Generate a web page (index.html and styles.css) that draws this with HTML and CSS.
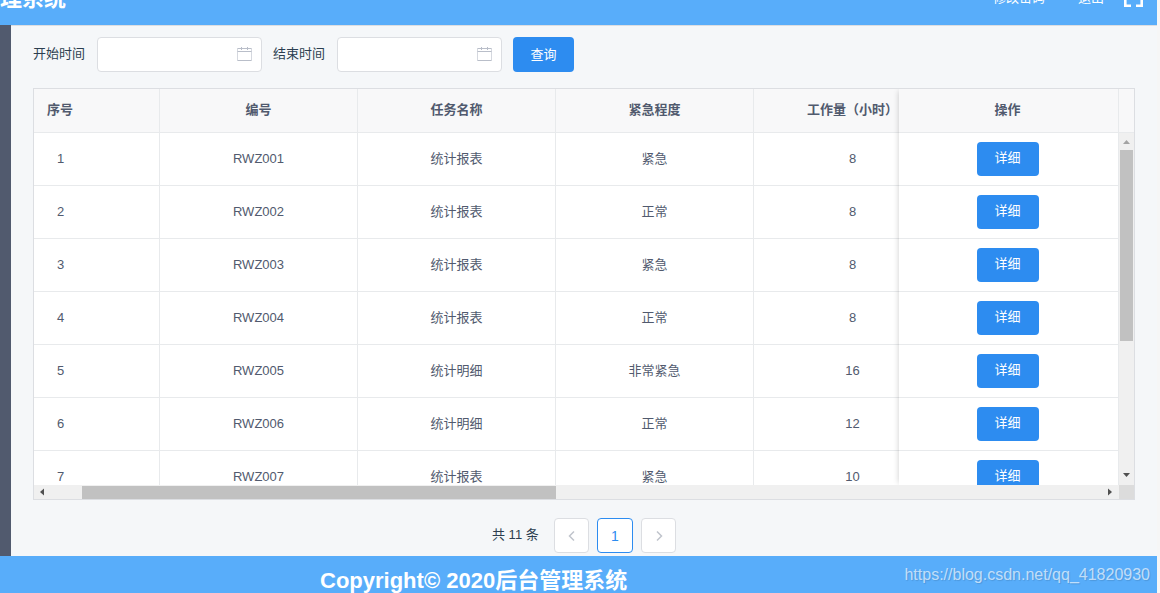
FILE: index.html
```html
<!DOCTYPE html>
<html lang="zh-CN">
<head>
<meta charset="utf-8">
<title>后台管理系统</title>
<link rel="stylesheet" href="styles.css">
</head>
<body>
<div class="app">
  <header class="header">
    <h1 class="title">理系统</h1>
    <nav class="nav">
      <a href="#">修改密码</a>
      <a href="#">退出</a>
      <button class="fullscreen" type="button" aria-label="全屏">
        <svg width="19" height="19" viewBox="0 0 19 19" fill="none" stroke="currentColor" stroke-width="2.600"><path d="M1.300 7V1.300H7M12 1.300h5.700V7M17.700 11v5.700H12M7 16.700H1.300V11"/></svg>
      </button>
    </nav>
  </header>
  <div class="middle">
    <aside class="sidebar"></aside>
    <main class="content">
      <form class="filters">
        <label for="start">开始时间</label>
        <div class="date">
          <input id="start" type="text">
          <svg class="calendar" width="15" height="15" viewBox="0 0 15 15" fill="none" stroke="currentColor"><path d="M.5 2.500h14M.5 5.500h14M.5 14.500h14M4.500 1v3M10.500 1v3"/><path d="M.5 2.500v12M14.500 2.500v12" stroke-opacity=".6"/></svg>
        </div>
        <label for="end">结束时间</label>
        <div class="date">
          <input id="end" type="text">
          <svg class="calendar" width="15" height="15" viewBox="0 0 15 15" fill="none" stroke="currentColor"><path d="M.5 2.500h14M.5 5.500h14M.5 14.500h14M4.500 1v3M10.500 1v3"/><path d="M.5 2.500v12M14.500 2.500v12" stroke-opacity=".6"/></svg>
        </div>
        <button class="btn" type="button">查询</button>
      </form>

      <section class="frame">
        <div class="view">
          <div class="scroller">
            <table class="grid wide">
              <colgroup><col class="c-index"><col class="c-data"><col class="c-data"><col class="c-data"><col class="c-data"></colgroup>
              <thead><tr><th class="first">序号</th><th>编号</th><th>任务名称</th><th>紧急程度</th><th>工作量（小时）</th></tr></thead>
              <tbody>
                <tr><td class="num">1</td><td>RWZ001</td><td>统计报表</td><td>紧急</td><td>8</td></tr>
                <tr><td class="num">2</td><td>RWZ002</td><td>统计报表</td><td>正常</td><td>8</td></tr>
                <tr><td class="num">3</td><td>RWZ003</td><td>统计报表</td><td>紧急</td><td>8</td></tr>
                <tr><td class="num">4</td><td>RWZ004</td><td>统计报表</td><td>正常</td><td>8</td></tr>
                <tr><td class="num">5</td><td>RWZ005</td><td>统计明细</td><td>非常紧急</td><td>16</td></tr>
                <tr><td class="num">6</td><td>RWZ006</td><td>统计明细</td><td>正常</td><td>12</td></tr>
                <tr><td class="num">7</td><td>RWZ007</td><td>统计报表</td><td>紧急</td><td>10</td></tr>
              </tbody>
            </table>
          </div>
          <div class="fixed">
            <table class="grid">
              <thead><tr><th>操作</th></tr></thead>
              <tbody>
                <tr><td><button class="btn" type="button">详细</button></td></tr>
                <tr><td><button class="btn" type="button">详细</button></td></tr>
                <tr><td><button class="btn" type="button">详细</button></td></tr>
                <tr><td><button class="btn" type="button">详细</button></td></tr>
                <tr><td><button class="btn" type="button">详细</button></td></tr>
                <tr><td><button class="btn" type="button">详细</button></td></tr>
                <tr><td><button class="btn" type="button">详细</button></td></tr>
              </tbody>
            </table>
          </div>
          <div class="vside">
            <div class="vhead"></div>
            <div class="vbar">
              <svg class="dim" width="15" height="17" viewBox="0 0 15 17"><path d="M4 11l3.500-4 3.500 4z" fill="currentColor"/></svg>
              <div class="vthumb"></div>
              <svg class="down" width="15" height="17" viewBox="0 0 15 17"><path d="M4 5h7l-3.500 4z" fill="currentColor"/></svg>
            </div>
          </div>
        </div>
        <div class="bottom">
          <div class="hbar">
            <svg width="17" height="14" viewBox="0 0 17 14"><path d="M10 3.500v7l-4-3.500z" fill="currentColor"/></svg>
            <div class="htrack"><div class="hthumb"></div></div>
            <svg width="17" height="14" viewBox="0 0 17 14"><path d="M6 3.500v7l4-3.500z" fill="currentColor"/></svg>
          </div>
          <div class="corner"></div>
        </div>
      </section>

      <nav class="pager" aria-label="分页">
        <span class="total">共 11 条</span>
        <button class="page" type="button" aria-label="上一页"><svg width="12" height="12" viewBox="0 0 12 12" fill="none" stroke="currentColor" stroke-width="1.5"><path d="M8 1.500L3.500 6 8 10.500"/></svg></button>
        <button class="page current" type="button">1</button>
        <button class="page" type="button" aria-label="下一页"><svg width="12" height="12" viewBox="0 0 12 12" fill="none" stroke="currentColor" stroke-width="1.5"><path d="M4 1.500L8.500 6 4 10.500"/></svg></button>
      </nav>
    </main>
  </div>
  <footer class="footer">Copyright© 2020后台管理系统</footer>
</div>
<div class="watermark">https://blog.csdn.net/qq_41820930</div>
</body>
</html>
```
FILE: styles.css
```css
* { box-sizing: border-box; }
body {
  margin: 0;
  height: 100vh;
  overflow: hidden;
  background: #f6f6f6;
  color: #2c3e50;
  font: 13px/20px "Liberation Sans", "Noto Sans CJK SC", sans-serif;
}
button, input { font: inherit; }
.app {
  display: flex;
  flex-direction: column;
  height: calc(100vh + 13px);
  margin-right: 3px;
  background: #f5f7f9;
}
.header {
  display: flex;
  flex: none;
  align-items: center;
  justify-content: space-between;
  height: 54px;
  margin-top: -29px;
  padding-right: 14px;
  background: #58adfa;
  color: #fff;
}
.title { margin: 0; padding-top: 2px; font-size: 22px; line-height: 28px; }
.nav { display: flex; align-items: center; }
.nav a { margin-right: 33px; color: #fff; text-decoration: none; }
.nav a + a { margin-right: 20px; }
.fullscreen { display: flex; padding: 0; border: 0; background: none; color: #fff; }

.middle { display: flex; flex: 1; min-height: 0; }
.sidebar { width: 11px; background: #515a6e; }
.content {
  flex: 1;
  min-width: 0;
  padding: 11px 22px 0;
  border-top: 1px solid #dcdee2;
}
.filters { display: flex; align-items: center; gap: 11px; height: 35px; }
.filters label { width: 53px; padding-bottom: 2px; white-space: nowrap; }
.date { position: relative; width: 165px; }
.date input {
  display: block;
  width: 100%;
  height: 35px;
  padding: 0 32px 0 8px;
  border: 1px solid #dcdee2;
  border-radius: 4px;
  background: #fff;
}
.calendar { position: absolute; top: 9px; right: 10px; color: #b9bec9; }
.btn {
  height: 34px;
  padding: 0 0 2px;
  border: 0;
  border-radius: 4px;
  background: #2d8cf0;
  color: #fff;
}
.filters .btn { width: 61px; height: 35px; padding: 0; }

.frame { margin-top: 16px; border: 1px solid #dcdee2; background: #fff; }
.view { display: flex; height: 396px; overflow: hidden; }
.scroller { flex: 1; min-width: 0; overflow: hidden; }
.grid {
  width: 100%;
  border-collapse: separate;
  border-spacing: 0;
  table-layout: fixed;
  color: #515a6e;
}
.wide { width: 918px; }
.c-index { width: 126px; }
.c-data { width: 198px; }
.grid th, .grid td {
  padding: 0;
  border-right: 1px solid #e8eaec;
  border-bottom: 1px solid #e8eaec;
  text-align: center;
  white-space: nowrap;
}
.grid th { height: 44px; padding-bottom: 1px; background: #f8f8f9; }
.grid td { height: 53px; }
.grid .first { padding-left: 13px; text-align: left; }
.grid .num { padding-left: 23px; text-align: left; }
.fixed { z-index: 1; width: 220px; background: #fff; box-shadow: -2px 0 6px -2px rgba(0, 0, 0, .2); }
.fixed th, .fixed td { padding-right: 2px; }
.fixed .btn { display: block; width: 62px; margin: 0 auto; }
.vside { z-index: 2; display: flex; flex-direction: column; width: 15px; }
.vhead { height: 44px; border-bottom: 1px solid #e8eaec; background: #f8f8f9; }
.vbar { display: flex; flex: 1; flex-direction: column; background: #f0f0f0; color: #505050; }
.vbar svg, .hbar svg { display: block; flex: none; }
.vbar .dim { color: #a3a3a3; }
.vthumb { height: 191px; margin: 0 1px; background: #c1c1c1; }
.down { margin-top: auto; }
.bottom { display: flex; }
.hbar { display: flex; flex: 1; background: #f0f0f0; color: #505050; }
.htrack { flex: 1; padding: 1px 0 0 31px; }
.hthumb { width: 474px; height: 13px; background: #c1c1c1; }
.corner { width: 15px; background: #dcdcdc; }

.pager { display: flex; justify-content: center; gap: 8px; margin-top: 18px; }
.total { width: 48px; margin: 7px 6px 0 0; white-space: nowrap; }
.page {
  display: flex;
  align-items: center;
  justify-content: center;
  width: 35px;
  height: 35px;
  padding: 0;
  border: 1px solid #dcdee2;
  border-radius: 4px;
  background: #fff;
  color: #c0c4cc;
}
.page.current { width: 36px; border-color: #2d8cf0; color: #2d8cf0; font-size: 14px; }
.footer {
  flex: none;
  height: 50px;
  padding-left: 320px;
  background: #58adfa;
  color: #fff;
  font-size: 22px;
  font-weight: bold;
  line-height: 50px;
}
.watermark {
  position: absolute;
  right: 10px;
  bottom: 8px;
  color: rgba(255, 255, 255, .65);
  font-size: 16px;
  text-shadow: 1px 1px 1px rgba(0, 0, 0, .12);
}
```
